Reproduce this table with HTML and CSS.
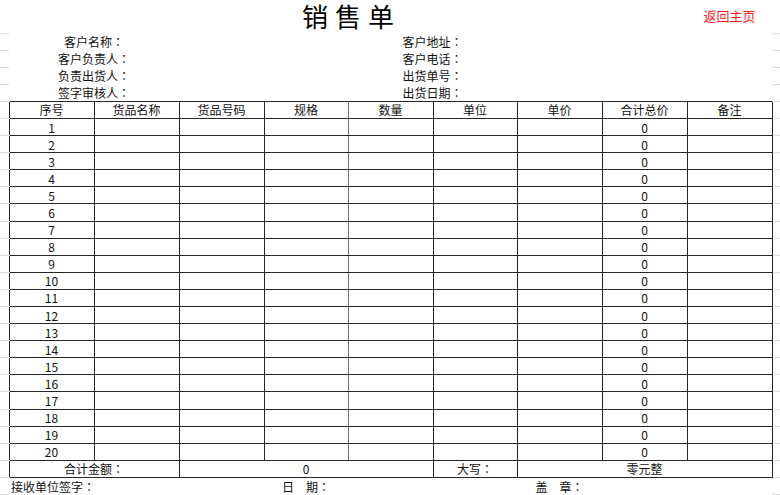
FILE: index.html
```html
<!DOCTYPE html>
<html lang="zh-CN">
<head>
<meta charset="utf-8">
<title>销售单</title>
<link rel="stylesheet" href="styles.css">
</head>
<body>
<table class="sheet">
  <colgroup>
    <col class="w-m1">
    <col class="w85"><col class="w85"><col class="w85"><col class="w84"><col class="w85">
    <col class="w84"><col class="w85"><col class="w85"><col class="w85">
    <col class="w-m2">
  </colgroup>
  <tbody>
    <tr class="title-row">
      <td class="mg"></td>
      <td colspan="8" class="title-cell"><div class="title">销售单</div></td>
      <td class="home">返回主页</td>
      <td class="mg"></td>
    </tr>
    <tr class="row">
      <td class="mg"></td>
      <td colspan="2" class="center">客户名称<span class="colon" lang="zh-TW">：</span></td><td colspan="2"></td>
      <td colspan="2" class="center">客户地址<span class="colon" lang="zh-TW">：</span></td><td colspan="3"></td>
      <td class="mg"></td>
    </tr>
    <tr class="row">
      <td class="mg"></td>
      <td colspan="2" class="center">客户负责人<span class="colon" lang="zh-TW">：</span></td><td colspan="2"></td>
      <td colspan="2" class="center">客户电话<span class="colon" lang="zh-TW">：</span></td><td colspan="3"></td>
      <td class="mg"></td>
    </tr>
    <tr class="row">
      <td class="mg"></td>
      <td colspan="2" class="center">负责出货人<span class="colon" lang="zh-TW">：</span></td><td colspan="2"></td>
      <td colspan="2" class="center">出货单号<span class="colon" lang="zh-TW">：</span></td><td colspan="3"></td>
      <td class="mg"></td>
    </tr>
    <tr class="row">
      <td class="mg"></td>
      <td colspan="2" class="center">签字审核人<span class="colon" lang="zh-TW">：</span></td><td colspan="2"></td>
      <td colspan="2" class="center">出货日期<span class="colon" lang="zh-TW">：</span></td><td colspan="3"></td>
      <td class="mg"></td>
    </tr>
    <tr class="row grid">
      <td class="mg"></td>
      <td>序号</td><td>货品名称</td><td>货品号码</td><td class="soft">规格</td><td>数量</td>
      <td>单位</td><td>单价</td><td>合计总价</td><td class="lite">备注</td>
      <td class="mg"></td>
    </tr>
    <tr class="row grid"><td class="mg"></td><td>1</td><td></td><td></td><td class="soft"></td><td></td><td></td><td></td><td>0</td><td class="lite"></td><td class="mg"></td></tr>
    <tr class="row grid"><td class="mg"></td><td>2</td><td></td><td></td><td class="soft"></td><td></td><td></td><td></td><td>0</td><td class="lite"></td><td class="mg"></td></tr>
    <tr class="row grid"><td class="mg"></td><td>3</td><td></td><td></td><td class="soft"></td><td></td><td></td><td></td><td>0</td><td class="lite"></td><td class="mg"></td></tr>
    <tr class="row grid"><td class="mg"></td><td>4</td><td></td><td></td><td class="soft"></td><td></td><td></td><td></td><td>0</td><td class="lite"></td><td class="mg"></td></tr>
    <tr class="row grid"><td class="mg"></td><td>5</td><td></td><td></td><td class="soft"></td><td></td><td></td><td></td><td>0</td><td class="lite"></td><td class="mg"></td></tr>
    <tr class="row grid"><td class="mg"></td><td>6</td><td></td><td></td><td class="soft"></td><td></td><td></td><td></td><td>0</td><td class="lite"></td><td class="mg"></td></tr>
    <tr class="row grid"><td class="mg"></td><td>7</td><td></td><td></td><td class="soft"></td><td></td><td></td><td></td><td>0</td><td class="lite"></td><td class="mg"></td></tr>
    <tr class="row grid"><td class="mg"></td><td>8</td><td></td><td></td><td class="soft"></td><td></td><td></td><td></td><td>0</td><td class="lite"></td><td class="mg"></td></tr>
    <tr class="row grid"><td class="mg"></td><td>9</td><td></td><td></td><td class="soft"></td><td></td><td></td><td></td><td>0</td><td class="lite"></td><td class="mg"></td></tr>
    <tr class="row grid"><td class="mg"></td><td>10</td><td></td><td></td><td class="soft"></td><td></td><td></td><td></td><td>0</td><td class="lite"></td><td class="mg"></td></tr>
    <tr class="row grid"><td class="mg"></td><td>11</td><td></td><td></td><td class="soft"></td><td></td><td></td><td></td><td>0</td><td class="lite"></td><td class="mg"></td></tr>
    <tr class="row grid"><td class="mg"></td><td>12</td><td></td><td></td><td class="soft"></td><td></td><td></td><td></td><td>0</td><td class="lite"></td><td class="mg"></td></tr>
    <tr class="row grid"><td class="mg"></td><td>13</td><td></td><td></td><td class="soft"></td><td></td><td></td><td></td><td>0</td><td class="lite"></td><td class="mg"></td></tr>
    <tr class="row grid"><td class="mg"></td><td>14</td><td></td><td></td><td class="soft"></td><td></td><td></td><td></td><td>0</td><td class="lite"></td><td class="mg"></td></tr>
    <tr class="row grid"><td class="mg"></td><td>15</td><td></td><td></td><td class="soft"></td><td></td><td></td><td></td><td>0</td><td class="lite"></td><td class="mg"></td></tr>
    <tr class="row grid"><td class="mg"></td><td>16</td><td></td><td></td><td class="soft"></td><td></td><td></td><td></td><td>0</td><td class="lite"></td><td class="mg"></td></tr>
    <tr class="row grid"><td class="mg"></td><td>17</td><td></td><td></td><td class="soft"></td><td></td><td></td><td></td><td>0</td><td class="lite"></td><td class="mg"></td></tr>
    <tr class="row grid"><td class="mg"></td><td>18</td><td></td><td></td><td class="soft"></td><td></td><td></td><td></td><td>0</td><td class="lite"></td><td class="mg"></td></tr>
    <tr class="row grid"><td class="mg"></td><td>19</td><td></td><td></td><td class="soft"></td><td></td><td></td><td></td><td>0</td><td class="lite"></td><td class="mg"></td></tr>
    <tr class="row grid"><td class="mg"></td><td>20</td><td></td><td></td><td class="soft"></td><td></td><td></td><td></td><td>0</td><td class="lite"></td><td class="mg"></td></tr>
    <tr class="row grid">
      <td class="mg"></td>
      <td colspan="2">合计金额<span class="colon" lang="zh-TW">：</span></td>
      <td colspan="3">0</td>
      <td>大写<span class="colon" lang="zh-TW">：</span></td>
      <td colspan="3">零元整</td>
      <td class="mg"></td>
    </tr>
    <tr class="row">
      <td class="mg"></td>
      <td colspan="3" class="left">接收单位签字<span class="colon" lang="zh-TW">：</span></td>
      <td class="center">日　期<span class="colon" lang="zh-TW">：</span></td>
      <td colspan="2"></td>
      <td class="center">盖　章<span class="colon" lang="zh-TW">：</span></td>
      <td colspan="2"></td>
      <td class="mg"></td>
    </tr>
  </tbody>
</table>
</body>
</html>
```

FILE: styles.css
```css
html, body {
  margin: 0;
  padding: 0;
  background: #ffffff;
}

body {
  width: 780px;
  height: 495px;
  overflow: hidden;
  font-family: "Noto Sans CJK SC", "Microsoft YaHei", sans-serif;
  font-size: 12px;
  color: #111111;
}

.sheet {
  width: 780px;
  border-collapse: collapse;
  table-layout: fixed;
}

.w-m1 { width: 9px; }
.w-m2 { width: 8px; }
.w85 { width: 85px; }
.w84 { width: 84px; }

.sheet td {
  padding: 0;
  line-height: 15px;
  text-align: center;
  vertical-align: middle;
  white-space: nowrap;
  overflow: visible;
}

.colon {
  font-family: "Noto Sans CJK TC", "Noto Sans CJK SC", sans-serif;
}

.title-row {
  height: 33px;
}

.row {
  height: 17.1px;
}

.sheet td.mg {
  border: none;
  border-bottom: 1px solid #dcdcdc;
}

.title {
  font-size: 26px;
  line-height: 30px;
  letter-spacing: 7px;
  padding-left: 7px;
  padding-bottom: 2px;
  color: #000000;
}

.sheet td.home {
  color: #ff1a1a;
  font-size: 13px;
  line-height: 15px;
  padding-bottom: 3px;
}

.center {
  text-align: center;
}

.sheet td.left {
  text-align: left;
  padding-left: 2px;
}

.grid td {
  border: 1px solid #262626;
}

.grid td.lite {
  border-left-color: #8c8c8c;
}

.grid td.soft {
  border-right-color: #6a6a6a;
}

.grid td.mg {
  border: none;
  border-bottom: 1px solid #dcdcdc;
}
```
